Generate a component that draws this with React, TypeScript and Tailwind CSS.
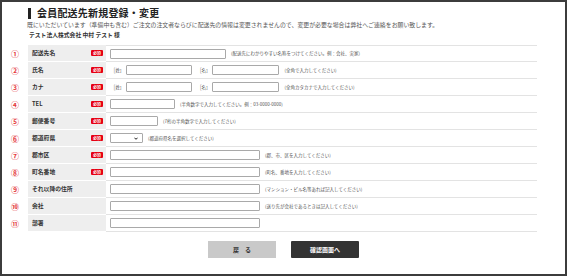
const ROWS: {
  no: string;
  label: string;
  required: boolean;
  kind: 'text' | 'name' | 'select';
  width?: number;
  hint?: string;
}[] = [
  { no: '①', label: '配送先名', required: true, kind: 'text', width: 116, hint: '(配送先にわかりやすい名称をつけてください。例：会社、実家)' },
  { no: '②', label: '氏名', required: true, kind: 'name', hint: '(全角で入力してください)' },
  { no: '③', label: 'カナ', required: true, kind: 'name', hint: '(全角カタカナで入力してください)' },
  { no: '④', label: 'TEL', required: true, kind: 'text', width: 65, hint: '(半角数字で入力してください。例：03-0000-0000)' },
  { no: '⑤', label: '郵便番号', required: true, kind: 'text', width: 48, hint: '(7桁の半角数字で入力してください)' },
  { no: '⑥', label: '都道府県', required: true, kind: 'select', hint: '(都道府県名を選択してください)' },
  { no: '⑦', label: '郡市区', required: true, kind: 'text', width: 150, hint: '(郡、市、区を入力してください)' },
  { no: '⑧', label: '町名番地', required: true, kind: 'text', width: 150, hint: '(町名、番地を入力してください)' },
  { no: '⑨', label: 'それ以降の住所', required: false, kind: 'text', width: 150, hint: '(マンション・ビル名等あれば記入してください)' },
  { no: '⑩', label: '会社', required: false, kind: 'text', width: 150, hint: '(送り先が会社であるときは記入してください)' },
  { no: '⑪', label: '部署', required: false, kind: 'text', width: 150 },
];

function Box({ w }: { w: number }) {
  return <div style={{ width: w }} className="h-[10px] bg-white border border-[#a9a9a9] rounded-[1px] shrink-0" />;
}

export default function App() {
  return (
    <div className="w-[570px] h-[279px] bg-white font-['Noto_Sans_CJK_JP',sans-serif]">
      <div className="w-[567px] h-[276px] border-2 border-[#3c3c3c] flex flex-col">
        {/* Title */}
        <div className="mt-[4px] pl-[26px] h-[14px] flex items-center">
          <span className="w-[3px] h-[11px] bg-[#222]" />
          <h1 className="ml-[6px] text-[10px] font-bold text-[#222] leading-none tracking-[0.2px]">会員配送先新規登録・変更</h1>
        </div>
        <p className="mt-[1px] pl-[25px] h-[8px] flex items-center text-[5.9px] text-[#555] leading-none whitespace-nowrap">
          既にいただいています（準備中も含む）ご注文の注文者ならびに配送先の情報は変更されませんので、変更が必要な場合は弊社へご連絡をお願い致します。
        </p>
        <p className="mt-[2px] pl-[27px] h-[8px] flex items-center text-[5.8px] font-bold text-[#333] leading-none whitespace-nowrap">
          テスト法人株式会社 中村 テスト 様
        </p>

        {/* Form table */}
        <div className="mt-[6px] pr-[28px] flex flex-col">
          {ROWS.map((r, i) => (
            <div key={r.no} className="flex h-[17px]">
              <div className="w-[26px] flex items-center justify-center text-[8px] font-bold text-[#e4393c] leading-none">{r.no}</div>
              <div className="w-[78px] bg-[#eeeeee] border-b border-white flex items-center justify-between pl-[4px] pr-[3px]">
                <span className="text-[5.8px] font-bold text-[#333] leading-none whitespace-nowrap">{r.label}</span>
                {r.required && (
                  <span className="w-[12px] h-[6px] rounded-[1px] bg-[#e60012] text-white text-[4px] font-bold leading-none flex items-center justify-center">必須</span>
                )}
              </div>
              <div
                className={`flex-1 flex items-center pl-[4px] border-b border-[#e3e3e3] ${i === 0 ? 'border-t' : ''}`}
              >
                {r.kind === 'text' && <Box w={r.width ?? 100} />}
                {r.kind === 'name' && (
                  <>
                    <span className="ml-[1px] text-[4.4px] text-[#555] leading-none">［姓］</span>
                    <div className="ml-[2px]"><Box w={66} /></div>
                    <span className="ml-[5px] text-[4.4px] text-[#555] leading-none">［名］</span>
                    <div className="ml-[2px]"><Box w={67} /></div>
                  </>
                )}
                {r.kind === 'select' && (
                  <div className="w-[33px] h-[10px] bg-white border border-[#a9a9a9] rounded-[1px] flex items-center justify-end pr-[4px]">
                    <svg viewBox="0 0 10 6" className="w-[4px] h-[3px]" fill="none" stroke="#111" strokeWidth={2.4}>
                      <path d="M1 1l4 4 4-4" />
                    </svg>
                  </div>
                )}
                {r.hint && (
                  <span className="ml-[5px] text-[4.5px] text-[#555] leading-none whitespace-nowrap">{r.hint}</span>
                )}
              </div>
            </div>
          ))}
        </div>

        {/* Buttons */}
        <div className="mt-[9px] flex justify-center gap-[15px]">
          <button className="w-[68px] h-[17px] bg-[#c9c9c9] text-[#333] text-[6px] font-bold leading-none">戻　る</button>
          <button className="w-[68px] h-[17px] bg-[#333333] rounded-[1px] text-white text-[6px] font-bold leading-none">確認画面へ</button>
        </div>
      </div>
    </div>
  );
}
